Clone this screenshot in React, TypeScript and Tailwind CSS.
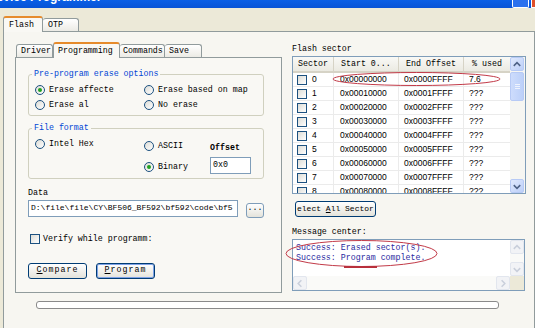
import React from "react";

// Windows XP style "Programmer" dialog, Programming tab

const rows = [
  { n: 0, start: "0x00000000", end: "0x0000FFFF", used: "7.6" },
  { n: 1, start: "0x00010000", end: "0x0001FFFF", used: "???" },
  { n: 2, start: "0x00020000", end: "0x0002FFFF", used: "???" },
  { n: 3, start: "0x00030000", end: "0x0003FFFF", used: "???" },
  { n: 4, start: "0x00040000", end: "0x0004FFFF", used: "???" },
  { n: 5, start: "0x00050000", end: "0x0005FFFF", used: "???" },
  { n: 6, start: "0x00060000", end: "0x0006FFFF", used: "???" },
  { n: 7, start: "0x00070000", end: "0x0007FFFF", used: "???" },
  { n: 8, start: "0x00080000", end: "0x0008FFFF", used: "???" },
];

function Radio({ checked, label }: { checked?: boolean; label: string }) {
  return (
    <div className="flex items-center gap-[4px] h-[15px]">
      <span className="w-[10px] h-[10px] rounded-full border border-[#1c5180] bg-gradient-to-br from-[#dcdcd6] to-white flex items-center justify-center">
        {checked && <span className="w-[4px] h-[4px] rounded-full bg-[#21a121]" />}
      </span>
      <span>{label}</span>
    </div>
  );
}

function CheckBox() {
  return (
    <span className="w-[10px] h-[10px] border border-[#1c5180] bg-gradient-to-br from-[#dcdcd6] to-white shrink-0" />
  );
}

function XpButton({
  children,
  isDefault,
  className = "",
}: {
  children: React.ReactNode;
  isDefault?: boolean;
  className?: string;
}) {
  return (
    <div
      className={`flex items-center justify-center rounded-[3px] border border-[#003c74] bg-gradient-to-b from-white to-[#e4e3db] ${
        isDefault ? "shadow-[inset_0_0_0_1px_#7fa2e6]" : ""
      } ${className}`}
    >
      {children}
    </div>
  );
}

function ScrollArrow({ dir, faded }: { dir: "up" | "down" | "left" | "right"; faded?: boolean }) {
  const d = {
    up: "M3 8 L6.5 4.5 L10 8",
    down: "M3 5 L6.5 8.5 L10 5",
    left: "M8 3 L4.5 6.5 L8 10",
    right: "M5 3 L8.5 6.5 L5 10",
  }[dir];
  return (
    <div
      className={`w-[14px] h-[14px] rounded-[2px] border flex items-center justify-center ${
        faded ? "border-[#e2e6ee] bg-[#f2f3f6]" : "border-[#b7caf5] bg-gradient-to-br from-[#e0e9fd] to-[#bccff8]"
      }`}
    >
      <svg width="13" height="13" viewBox="0 0 13 13">
        <path d={d} fill="none" stroke={faded ? "#c9cfdb" : "#4d6185"} strokeWidth="1.6" />
      </svg>
    </div>
  );
}

export default function App() {
  return (
    <div className="w-[535px] h-[328px] overflow-hidden bg-[#ece9d8] relative font-['Liberation_Mono',monospace] text-[8.3px] leading-none text-black">
      {/* title bar, mostly cropped */}
      <div className="h-[8px] bg-gradient-to-b from-[#0a5fe6] to-[#0853d6] flex justify-between overflow-hidden">
        <span className="-mt-[9px] -ml-[12px] text-white font-bold text-[12px] font-['Liberation_Sans',sans-serif]">
          Device Programmer
        </span>
        <div className="flex gap-[2px]">
          <div className="w-[17px] h-[8px] rounded-b-[2px] border border-t-0 border-white bg-[#2b71ee]" />
          <div className="w-[4px] h-[8px] border-l border-b border-white bg-[#e0502a]" />
        </div>
      </div>

      {/* outer tabs */}
      <div className="pl-[3px] pt-[8px]">
        <div className="flex items-end h-[15px]">
          <div className="relative z-10 -mb-px h-[16px] w-[40px] border border-b-0 border-[#919b9c] border-t-[#e68b2c] border-t-2 rounded-t-[3px] bg-[#f9f8f4] flex items-center pl-[5px]">
            Flash
          </div>
          <div className="h-[13px] w-[36px] border border-l-0 border-b-0 border-[#919b9c] rounded-t-[3px] bg-gradient-to-b from-white to-[#ecebe5] flex items-center pl-[5px]">
            OTP
          </div>
        </div>

        {/* outer panel */}
        <div className="border border-[#919b9c] bg-[#f7f6f1] h-[320px] pl-[11px] pt-[10px]">
          <div className="flex">
            {/* left: inner tab control */}
            <div className="w-[267px]">
              <div className="flex items-end h-[15px] pl-px">
                <div className="h-[13px] w-[37px] border border-b-0 border-[#919b9c] rounded-t-[3px] bg-gradient-to-b from-white to-[#ecebe5] flex items-center pl-[4px]">
                  Driver
                </div>
                <div className="relative z-10 -mb-px h-[16px] w-[67px] border border-b-0 border-[#919b9c] border-t-[#e68b2c] border-t-2 rounded-t-[3px] bg-[#f9f8f4] flex items-center pl-[4px]">
                  Programming
                </div>
                <div className="h-[13px] w-[45px] border border-l-0 border-b-0 border-[#919b9c] rounded-t-[3px] bg-gradient-to-b from-white to-[#ecebe5] flex items-center pl-[3px]">
                  Commands
                </div>
                <div className="h-[13px] w-[37px] border border-l-0 border-b-0 border-[#919b9c] rounded-t-[3px] bg-gradient-to-b from-white to-[#ecebe5] flex items-center pl-[4px]">
                  Save
                </div>
              </div>

              <div className="h-[236px] border border-[#919b9c] bg-[#f9f8f4] pl-[12px]">
                {/* erase options */}
                <fieldset className="mt-[12px] w-[236px] border border-[#d0d0bf] rounded-[3px] pl-[6px] pb-[3px]">
                  <legend className="ml-[-3px] px-[2px] text-[#0046d5]">Pre-program erase options</legend>
                  <div className="grid grid-cols-[109px_1fr] pt-[4px]">
                    <Radio checked label="Erase affecte" />
                    <Radio label="Erase based on map" />
                    <Radio label="Erase al" />
                    <Radio label="No erase" />
                  </div>
                </fieldset>

                {/* file format */}
                <fieldset className="mt-[8px] w-[236px] border border-[#d0d0bf] rounded-[3px] pl-[6px] pb-[3px]">
                  <legend className="ml-[-3px] px-[2px] text-[#0046d5]">File format</legend>
                  <div className="flex pt-[4px]">
                    <div className="w-[109px]">
                      <Radio label="Intel Hex" />
                    </div>
                    <div className="w-[66px] pt-[2px] flex flex-col gap-[6px]">
                      <Radio label="ASCII" />
                      <Radio checked label="Binary" />
                    </div>
                    <div className="pt-[7px]">
                      <div className="h-[8px] font-bold">Offset</div>
                      <div className="mt-[5px] w-[41px] h-[17px] border border-[#7f9db9] bg-white flex items-center pl-[2px]">
                        0x0
                      </div>
                    </div>
                  </div>
                </fieldset>

                {/* data file */}
                <div className="mt-[10px] h-[8px]">Data</div>
                <div className="mt-[3px] flex items-start">
                  <div className="w-[210px] h-[17px] border border-[#7f9db9] bg-white flex items-center pl-[2px] overflow-hidden whitespace-nowrap text-[8px]">
                    D:\file\file\CY\BF506_BF592\bf592\code\bf5
                  </div>
                  <XpButton className="ml-[8px] mt-[3px] w-[18px] h-[15px] border-[#7f9db9] pb-[3px]">...</XpButton>
                </div>

                {/* verify */}
                <div className="mt-[16px] ml-[2px] flex items-center gap-[3px] h-[11px]">
                  <CheckBox />
                  <span>Verify while programm:</span>
                </div>

                {/* action buttons */}
                <div className="mt-[18px] flex gap-[9px]">
                  <XpButton className="w-[59px] h-[16px]">
                    <span className="tracking-[1px]">
                      <span className="underline">C</span>ompare
                    </span>
                  </XpButton>
                  <XpButton isDefault className="w-[59px] h-[16px]">
                    <span className="tracking-[1px]">
                      <span className="underline">P</span>rogram
                    </span>
                  </XpButton>
                </div>
              </div>
            </div>

            {/* right: flash sector + messages */}
            <div className="ml-[8px] w-[236px]">
              <div className="mt-[3px] ml-[2px] h-[8px]">Flash sector</div>

              <div className="mt-[3px] ml-[2px] w-[234px] h-[138px] border border-[#7f9db9] bg-white flex overflow-hidden">
                <div className="flex-1 overflow-hidden">
                  <div className="flex h-[16px] bg-gradient-to-b from-[#f9f9f6] to-[#ebeae2] border-b-2 border-[#d6d3c6]">
                    <div className="w-[41px] border-r border-[#d6d3c6] flex items-center justify-center">Sector</div>
                    <div className="w-[65px] border-r border-[#d6d3c6] flex items-center pl-[7px]">Start 0...</div>
                    <div className="w-[65px] border-r border-[#d6d3c6] flex items-center justify-center">End Offset</div>
                    <div className="w-[46px] flex items-center justify-center">% used</div>
                  </div>
                  <div className="font-['Liberation_Sans',sans-serif] text-[8.5px]">
                    {rows.map((r) => (
                      <div key={r.n} className="flex h-[14px] border-b border-[#ebebeb]">
                        <div className="w-[41px] border-r border-[#ebebeb] flex items-center pl-[4px] gap-[5px]">
                          <CheckBox />
                          <span>{r.n}</span>
                        </div>
                        <div className="w-[65px] border-r border-[#ebebeb] flex items-center pl-[6px]">{r.start}</div>
                        <div className="w-[65px] border-r border-[#ebebeb] flex items-center pl-[5px]">{r.end}</div>
                        <div className="w-[46px] flex items-center pl-[5px]">{r.used}</div>
                      </div>
                    ))}
                  </div>
                </div>
                <div className="w-[15px] bg-[#f6f6f2] flex flex-col">
                  <ScrollArrow dir="up" />
                  <div className="mt-px h-[29px] w-[14px] rounded-[2px] border border-[#b7caf5] bg-gradient-to-r from-[#cddcfc] to-[#bcd0f9] flex flex-col items-center justify-center gap-px">
                    <span className="w-[5px] h-px bg-[#eef3fe]" />
                    <span className="w-[5px] h-px bg-[#eef3fe]" />
                    <span className="w-[5px] h-px bg-[#eef3fe]" />
                  </div>
                  <div className="flex-1" />
                  <ScrollArrow dir="down" />
                </div>
              </div>

              <XpButton className="mt-[7px] ml-[5px] w-[81px] h-[16px] justify-start border-[#2e4f7d] overflow-hidden whitespace-nowrap text-[8px]">
                <span className="pl-px">
                  elect <span className="underline">A</span>ll Sector
                </span>
              </XpButton>

              <div className="mt-[11px] ml-[2px] h-[8px]">Message center:</div>
              <div className="mt-[3px] ml-[2px] w-[233px] h-[52px] border border-[#7f9db9] bg-white flex flex-col">
                <div className="flex flex-1">
                  <div className="flex-1 pl-[3px] pt-[3px] text-[#2a2aa0] leading-[10px]">
                    <div>Success: Erased sector(s).</div>
                    <div>Success: Program complete.</div>
                  </div>
                  <div className="w-[14px] flex flex-col justify-between bg-[#fafaf8]">
                    <ScrollArrow dir="up" faded />
                    <ScrollArrow dir="down" faded />
                  </div>
                </div>
                <div className="flex h-[14px] bg-[#fafaf8]">
                  <ScrollArrow dir="left" faded />
                  <div className="flex-1" />
                  <ScrollArrow dir="right" faded />
                  <div className="w-[14px] bg-[#ece9d8]" />
                </div>
              </div>
            </div>
          </div>

          {/* progress bar */}
          <div className="mt-[8px] ml-[21px] w-[463px] h-[8px] rounded-[3px] border border-[#8a8a8a] bg-white" />
        </div>
      </div>

      {/* red annotation marks drawn over the screenshot */}
      <svg className="absolute inset-0 pointer-events-none" width="535" height="328" viewBox="0 0 535 328">
        <ellipse cx="416.5" cy="79" rx="83.5" ry="6.5" fill="none" stroke="#c23a48" strokeWidth="1" />
        <ellipse cx="361.5" cy="253.5" rx="75.5" ry="13" fill="none" stroke="#c23a48" strokeWidth="1" />
        <line x1="344" y1="267" x2="377" y2="267" stroke="#b8303c" strokeWidth="2" />
      </svg>
    </div>
  );
}
